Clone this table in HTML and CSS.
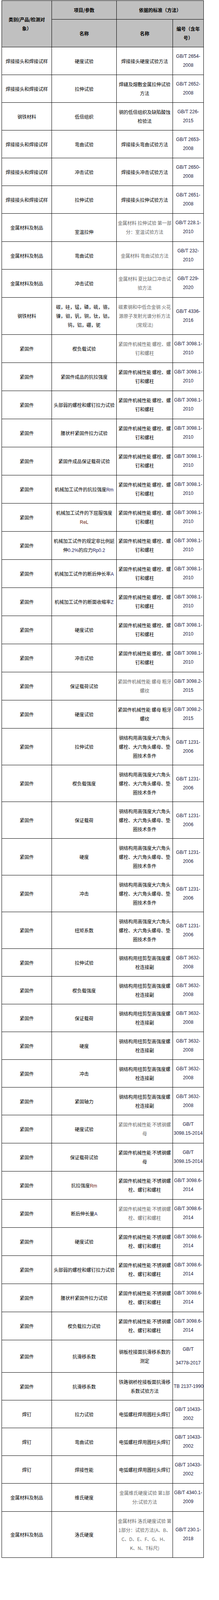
FILE: index.html
```html
<!DOCTYPE html>
<html lang="zh-CN">
<head>
<meta charset="utf-8">
<title>检测标准</title>
<link rel="stylesheet" href="styles.css">
</head>
<body>
<table class="std">
<colgroup>
<col class="c1"><col class="c2"><col class="c3"><col class="c4">
</colgroup>
<thead>
<tr>
<th rowspan="2">类别(产品/检测对<br>象）</th>
<th>项目/参数</th>
<th colspan="2">依据的标准（方法）</th>
</tr>
<tr>
<th>名称</th>
<th>名称</th>
<th>编号（含年<br>号）</th>
</tr>
</thead>
<tbody>
<tr><td>焊接接头和焊接试样</td><td>硬度试验</td><td>焊接接头硬度试验方法</td><td class="n">GB/T 2654-<br>2008</td></tr>
<tr><td>焊接接头和焊接试样</td><td>拉伸试验</td><td>焊缝及熔敷金属拉伸试验<br>方法</td><td class="n">GB/T 2652-<br>2008</td></tr>
<tr><td>钢铁材料</td><td>低倍组织</td><td>钢的低倍组织及缺陷酸蚀<br>检验法</td><td class="n">GB/T 226-<br>2015</td></tr>
<tr><td>焊接接头和焊接试样</td><td>弯曲试验</td><td>焊接接头弯曲试验方法</td><td class="n">GB/T 2653-<br>2008</td></tr>
<tr><td>焊接接头和焊接试样</td><td>冲击试验</td><td>焊接接头冲击试验方法</td><td class="n">GB/T 2650-<br>2008</td></tr>
<tr><td>焊接接头和焊接试样</td><td>拉伸试验</td><td>焊接接头拉伸试验方法</td><td class="n">GB/T 2651-<br>2008</td></tr>
<tr class="t"><td>金属材料及制品</td><td><br>室温拉伸</td><td class="g">金属材料 拉伸试验 第一部<br>分：室温试验方法</td><td class="n">GB/T 228.1-<br>2010</td></tr>
<tr><td>金属材料及制品</td><td>弯曲试验</td><td class="g">金属材料 弯曲试验方法</td><td class="n">GB/T 232-<br>2010</td></tr>
<tr class="t"><td>金属材料及制品</td><td>冲击试验</td><td class="g">金属材料 夏比缺口冲击试<br>验方法</td><td class="n">GB/T 229-<br>2020</td></tr>
<tr class="t"><td>钢铁材料</td><td>碳，硅，锰，磷，硫，铬，<br>镍，钼，钒，铜，钛，钴，<br>钨，铝，硼，铌</td><td class="g">碳素钢和中低合金钢 火花<br>源原子发射光谱分析方法<br>(常规法)</td><td class="n">GB/T 4336-<br>2016</td></tr>
<tr class="t"><td>紧固件</td><td>楔负载试验</td><td class="g">紧固件机械性能 螺栓、螺<br>钉和螺柱</td><td class="n">GB/T 3098.1-<br>2010</td></tr>
<tr class="t"><td>紧固件</td><td>紧固件成品的抗拉强度</td><td>紧固件机械性能 螺栓、螺<br>钉和螺柱</td><td class="n">GB/T 3098.1-<br>2010</td></tr>
<tr class="t"><td>紧固件</td><td>头部弱的螺栓和螺钉拉力试验</td><td>紧固件机械性能 螺栓、螺<br>钉和螺柱</td><td class="n">GB/T 3098.1-<br>2010</td></tr>
<tr class="t"><td>紧固件</td><td>腰状杆紧固件拉力试验</td><td>紧固件机械性能 螺栓、螺<br>钉和螺柱</td><td class="n">GB/T 3098.1-<br>2010</td></tr>
<tr class="t"><td>紧固件</td><td>紧固件成品保证载荷试验</td><td>紧固件机械性能 螺栓、螺<br>钉和螺柱</td><td class="n">GB/T 3098.1-<br>2010</td></tr>
<tr class="t"><td>紧固件</td><td>机械加工试件的抗拉强度<span class="en b">Rm</span></td><td>紧固件机械性能 螺栓、螺<br>钉和螺柱</td><td class="n">GB/T 3098.1-<br>2010</td></tr>
<tr class="t"><td>紧固件</td><td>机械加工试件的下屈服强度<br><span class="en r">ReL</span></td><td>紧固件机械性能 螺栓、螺<br>钉和螺柱</td><td class="n">GB/T 3098.1-<br>2010</td></tr>
<tr class="t"><td>紧固件</td><td>机械加工试件的规定非比例延<br>伸<span class="en b">0.2%</span>的应力<span class="en b">Rp0.2</span></td><td>紧固件机械性能 螺栓、螺<br>钉和螺柱</td><td class="n">GB/T 3098.1-<br>2010</td></tr>
<tr class="t"><td>紧固件</td><td>机械加工试件的断后伸长率<span class="en b">A</span></td><td>紧固件机械性能 螺栓、螺<br>钉和螺柱</td><td class="n">GB/T 3098.1-<br>2010</td></tr>
<tr class="t"><td>紧固件</td><td>机械加工试件的断面收缩率<span class="en b">Z</span></td><td>紧固件机械性能 螺栓、螺<br>钉和螺柱</td><td class="n">GB/T 3098.1-<br>2010</td></tr>
<tr class="t"><td>紧固件</td><td>硬度试验</td><td>紧固件机械性能 螺栓、螺<br>钉和螺柱</td><td class="n">GB/T 3098.1-<br>2010</td></tr>
<tr class="t"><td>紧固件</td><td>冲击试验</td><td>紧固件机械性能 螺栓、螺<br>钉和螺柱</td><td class="n">GB/T 3098.1-<br>2010</td></tr>
<tr class="t"><td>紧固件</td><td>保证载荷试验</td><td class="g">紧固件机械性能 螺母 粗牙<br>螺纹</td><td class="n">GB/T 3098.2-<br>2015</td></tr>
<tr class="t"><td>紧固件</td><td>硬度试验</td><td>紧固件机械性能 螺母 粗牙<br>螺纹</td><td class="n">GB/T 3098.2-<br>2015</td></tr>
<tr><td>紧固件</td><td>拉伸试验</td><td>钢结构用高强度大六角头<br>螺栓、大六角头螺母、垫<br>圈技术条件</td><td class="n">GB/T 1231-<br>2006</td></tr>
<tr><td>紧固件</td><td>楔负载强度</td><td>钢结构用高强度大六角头<br>螺栓、大六角头螺母、垫<br>圈技术条件</td><td class="n">GB/T 1231-<br>2006</td></tr>
<tr><td>紧固件</td><td>保证载荷</td><td>钢结构用高强度大六角头<br>螺栓、大六角头螺母、垫<br>圈技术条件</td><td class="n">GB/T 1231-<br>2006</td></tr>
<tr><td>紧固件</td><td>硬度</td><td>钢结构用高强度大六角头<br>螺栓、大六角头螺母、垫<br>圈技术条件</td><td class="n">GB/T 1231-<br>2006</td></tr>
<tr><td>紧固件</td><td>冲击</td><td>钢结构用高强度大六角头<br>螺栓、大六角头螺母、垫<br>圈技术条件</td><td class="n">GB/T 1231-<br>2006</td></tr>
<tr><td>紧固件</td><td>扭矩系数</td><td>钢结构用高强度大六角头<br>螺栓、大六角头螺母、垫<br>圈技术条件</td><td class="n">GB/T 1231-<br>2006</td></tr>
<tr><td>紧固件</td><td>拉伸试验</td><td>钢结构用扭剪型高强度螺<br>栓连接副</td><td class="n">GB/T 3632-<br>2008</td></tr>
<tr><td>紧固件</td><td>楔负载强度</td><td>钢结构用扭剪型高强度螺<br>栓连接副</td><td class="n">GB/T 3632-<br>2008</td></tr>
<tr><td>紧固件</td><td>保证载荷</td><td>钢结构用扭剪型高强度螺<br>栓连接副</td><td class="n">GB/T 3632-<br>2008</td></tr>
<tr><td>紧固件</td><td>硬度</td><td>钢结构用扭剪型高强度螺<br>栓连接副</td><td class="n">GB/T 3632-<br>2008</td></tr>
<tr><td>紧固件</td><td>冲击</td><td>钢结构用扭剪型高强度螺<br>栓连接副</td><td class="n">GB/T 3632-<br>2008</td></tr>
<tr><td>紧固件</td><td>紧固轴力</td><td>钢结构用扭剪型高强度螺<br>栓连接副</td><td class="n">GB/T 3632-<br>2008</td></tr>
<tr class="t"><td>紧固件</td><td>硬度试验</td><td class="g">紧固件机械性能 不锈钢螺<br>母</td><td class="n">GB/T<br>3098.15-2014</td></tr>
<tr class="t"><td>紧固件</td><td>保证载荷试验</td><td>紧固件机械性能 不锈钢螺<br>母</td><td class="n">GB/T<br>3098.15-2014</td></tr>
<tr class="t"><td>紧固件</td><td>抗拉强度<span class="en r">Rm</span></td><td>紧固件机械性能 不锈钢螺<br>栓、螺钉和螺柱</td><td class="n">GB/T 3098.6-<br>2014</td></tr>
<tr class="t"><td>紧固件</td><td>断后伸长量<span class="en b">A</span></td><td class="g">紧固件机械性能 不锈钢螺<br>栓、螺钉和螺柱</td><td class="n">GB/T 3098.6-<br>2014</td></tr>
<tr class="t"><td>紧固件</td><td>硬度试验</td><td>紧固件机械性能 不锈钢螺<br>栓、螺钉和螺柱</td><td class="n">GB/T 3098.6-<br>2014</td></tr>
<tr class="t"><td>紧固件</td><td>头部弱的螺栓和螺钉拉力试验</td><td>紧固件机械性能 不锈钢螺<br>栓、螺钉和螺柱</td><td class="n">GB/T 3098.6-<br>2014</td></tr>
<tr class="t"><td>紧固件</td><td>腰状杆紧固件拉力试验</td><td>紧固件机械性能 不锈钢螺<br>栓、螺钉和螺柱</td><td class="n">GB/T 3098.6-<br>2014</td></tr>
<tr class="t"><td>紧固件</td><td>楔负载拉力试验</td><td>紧固件机械性能 不锈钢螺<br>栓、螺钉和螺柱</td><td class="n">GB/T 3098.6-<br>2014</td></tr>
<tr><td>紧固件</td><td>抗滑移系数</td><td>钢板栓接面抗滑移系数的<br>测定</td><td class="n">GB/T<span class="gap">34778-2017</span></td></tr>
<tr><td>紧固件</td><td>抗滑移系数</td><td>铁路钢桥栓接板面抗滑移<br>系数试验方法</td><td class="n">TB 2137-1990</td></tr>
<tr><td>焊钉</td><td>拉力试验</td><td>电弧螺柱焊用圆柱头焊钉</td><td class="n">GB/T 10433-<br>2002</td></tr>
<tr><td>焊钉</td><td>弯曲试验</td><td>电弧螺柱焊用圆柱头焊钉</td><td class="n">GB/T 10433-<br>2002</td></tr>
<tr><td>焊钉</td><td>焊接性能</td><td>电弧螺柱焊用圆柱头焊钉</td><td class="n">GB/T 10433-<br>2002</td></tr>
<tr class="t"><td>金属材料及制品</td><td>维氏硬度</td><td class="g">金属维氏硬度试验 第1部<br>分:试验方法</td><td class="n">GB/T 4340.1-<br>2009</td></tr>
<tr class="t"><td>金属材料及制品</td><td>洛氏硬度</td><td class="g">金属材料 洛氏硬度试验 第<br>1部分：试验方法(A、B、<br>C、D、E、F、G、H、<br>K、N、T标尺)</td><td class="n">GB/T 230.1-<br>2018</td></tr>
</tbody>
</table>
</body>
</html>
```

FILE: styles.css
```css
html, body {
  margin: 0;
  padding: 0;
  background: #ffffff;
}

body {
  font-family: "Noto Sans CJK SC", sans-serif;
  color: #000000;
}

.std {
  border-collapse: collapse;
  table-layout: fixed;
  width: 518px;
  margin: 1px 0 0 4px;
  background: #ffffff;
}

.c1 { width: 128px; }
.c2 { width: 166px; }
.c3 { width: 144px; }
.c4 { width: 79px; }

.std th,
.std td {
  border: 1px solid #000000;
  padding: 12px 2px 12px;
  font-family: "Noto Sans CJK SC", sans-serif;
  font-size: 12px;
  line-height: 23px;
  text-align: center;
  vertical-align: middle;
  white-space: nowrap;
  color: #000000;
}

.std th {
  background: #c0c0c0;
  font-weight: bold;
}

.std tr.t td {
  padding-bottom: 13px;
}

.std td.g {
  color: #6b6b6b;
}

.std td.n {
  font-family: "Liberation Sans", Arial, sans-serif;
  color: #16163a;
}

.en {
  font-family: "Liberation Sans", Arial, sans-serif;
  line-height: 12px;
}

.b { color: #1c1c5c; }
.r { color: #6a1a10; }

.gap {
  display: block;
  margin-top: 12px;
}
```
